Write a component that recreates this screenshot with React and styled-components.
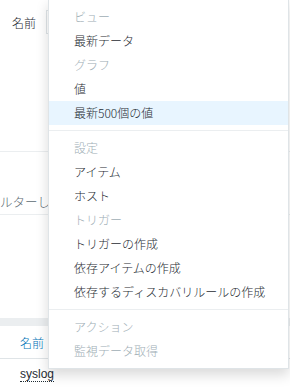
import React from "react";
import styled, { createGlobalStyle } from "styled-components";

const GlobalStyle = createGlobalStyle`
	html, body {
		margin: 0;
		padding: 0;
		background: #fff;
	}
	body {
		width: 290px;
		height: 387px;
		overflow: hidden;
		font-family: "Liberation Sans", "Noto Sans CJK JP", sans-serif;
		font-size: 12px;
		color: #1f2c33;
	}
`;

const menuSections = [
	{
		items: [
			{ label: "ビュー", header: true },
			{ label: "最新データ" },
			{ label: "グラフ", header: true },
			{ label: "値" },
			{ label: "最新500個の値", active: true },
		],
	},
	{
		items: [
			{ label: "設定", header: true },
			{ label: "アイテム" },
			{ label: "ホスト" },
			{ label: "トリガー", header: true },
			{ label: "トリガーの作成" },
			{ label: "依存アイテムの作成" },
			{ label: "依存するディスカバリルールの作成" },
		],
	},
	{
		items: [
			{ label: "アクション", header: true },
			{ label: "監視データ取得", header: true },
		],
	},
];

const App = () => {
	return (
		<>
			<GlobalStyle />
			<Page>
				<FilterRow>
					<FilterLabel>名前</FilterLabel>
					<FilterInput />
				</FilterRow>
				<FilterBlock />
				<OptionRow>
					<OptionText>ルターしない</OptionText>
				</OptionRow>
				<Spacer />
				<TableTop />
				<TableHead>
					<SortLink>名前</SortLink>
					<SortMark>▲</SortMark>
				</TableHead>
				<TableRow>
					<HostLink>syslog</HostLink>
				</TableRow>
			</Page>

			<PopupMenu>
				{menuSections.map((section, i) => (
					<Section key={i} first={i === 0}>
						{section.items.map((item) => (
							<MenuItem
								key={item.label}
								header={item.header}
								active={item.active}
							>
								{item.label}
							</MenuItem>
						))}
					</Section>
				))}
			</PopupMenu>
		</>
	);
};

export default App;

const Page = styled.div`
	display: flex;
	flex-direction: column;
	width: 290px;
`;

const FilterRow = styled.div`
	display: flex;
	align-items: center;
	height: 44px;
`;

const FilterLabel = styled.span`
	width: 36px;
	text-align: right;
	padding-right: 10px;
	font-family: "Noto Sans CJK JP", sans-serif;
	font-weight: 300;
	font-size: 12px;
	color: #1f2c33;
`;

const FilterInput = styled.div`
	width: 200px;
	height: 22px;
	border: 1px solid #dfe4e7;
`;

const FilterBlock = styled.div`
	height: 107px;
	border-bottom: 1px solid #ebeef0;
`;

const OptionRow = styled.div`
	display: flex;
	align-items: flex-end;
	height: 63px;
	padding-bottom: 3px;
	border-bottom: 1px solid #ebeef0;
	box-sizing: border-box;
`;

const OptionText = styled.span`
	font-family: "Noto Sans CJK JP", sans-serif;
	font-weight: 300;
	font-size: 12.5px;
	color: #5c6b73;
	white-space: nowrap;
`;

const Spacer = styled.div`
	height: 103px;
`;

const TableTop = styled.div`
	height: 8px;
	background: #ebeef0;
`;

const TableHead = styled.div`
	display: flex;
	align-items: center;
	gap: 3px;
	height: 32px;
	padding-left: 20px;
	border-bottom: 1px solid #dfe4e7;
`;

const SortLink = styled.span`
	font-family: "Noto Sans CJK JP", sans-serif;
	font-weight: 300;
	font-size: 12px;
	color: #0275b8;
`;

const SortMark = styled.span`
	font-size: 6px;
	color: #0275b8;
`;

const TableRow = styled.div`
	display: flex;
	align-items: center;
	height: 30px;
	padding-left: 20px;
`;

const HostLink = styled.span`
	font-family: "Liberation Sans", sans-serif;
	font-size: 12px;
	color: #1f2c33;
	border-bottom: 1px dotted #1f2c33;
	line-height: 14px;
`;

const PopupMenu = styled.div`
	position: absolute;
	left: 48px;
	top: -1px;
	width: 239px;
	background: #fff;
	border: 1px solid #dfe4e7;
	box-shadow: 0 6px 12px rgba(0, 0, 0, 0.15);
	font-family: "Noto Sans CJK JP", sans-serif;
	font-weight: 300;
`;

const Section = styled.div`
	padding: 5px 0;
	border-top: ${({ first }) => (first ? "none" : "1px solid #ebeef0")};
`;

const MenuItem = styled.div`
	height: 24px;
	line-height: 24px;
	padding-left: 25px;
	font-size: 12px;
	white-space: nowrap;
	color: ${({ header }) => (header ? "#a0aeb5" : "#1f2c33")};
	background: ${({ active }) => (active ? "#e8f5ff" : "transparent")};
`;
